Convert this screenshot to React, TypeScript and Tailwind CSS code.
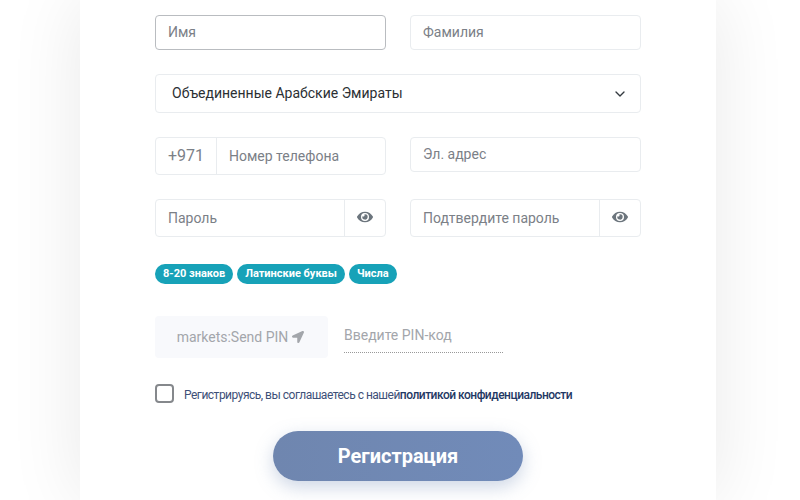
import { ChevronDown } from 'lucide-react'
import { FaEye, FaLocationArrow } from 'react-icons/fa'

function Field({ label, active }: { label: string; active?: boolean }) {
  return (
    <div
      className={`flex h-[35px] w-[231px] items-center rounded border px-[12px] text-[14px] text-[#7b8087] ${
        active ? 'border-[#b9bcc0]' : 'border-[#e9ecef]'
      }`}
    >
      {label}
    </div>
  )
}

function PasswordField({ label }: { label: string }) {
  return (
    <div className="flex h-[38px] w-[231px] items-center rounded border border-[#e9ecef] text-[14px] text-[#7b8087]">
      <div className="flex-1 px-[12px]">{label}</div>
      <div className="flex h-full w-[41px] items-center justify-center border-l border-[#e9ecef] pb-[2px]">
        <FaEye size={16} color="#6c757d" />
      </div>
    </div>
  )
}

function Pill({ label }: { label: string }) {
  return (
    <span className="flex h-[20px] items-center rounded-full bg-[#17a2b8] px-[8px] text-[11px] font-bold text-white">
      {label}
    </span>
  )
}

export default function App() {
  return (
    <div className="h-[500px] w-[800px] overflow-hidden bg-white font-['Roboto',sans-serif]">
      <div className="mx-[80px] h-full w-[636px] bg-white px-[75px] pt-[15px] shadow-[0_0_70px_rgba(0,0,0,0.09)]">
        {/* Name */}
        <div className="flex gap-[24px]">
          <Field label="Имя" active />
          <Field label="Фамилия" />
        </div>

        {/* Country */}
        <div className="mt-[24px] flex h-[39px] w-[486px] items-center justify-between rounded border border-[#e9ecef] pr-[12px] pl-[16px] text-[14px] text-[#2b2f33]">
          <span>Объединенные Арабские Эмираты</span>
          <ChevronDown size={16} strokeWidth={2} className="text-[#343a40]" />
        </div>

        {/* Phone + email */}
        <div className="mt-[24px] flex items-start gap-[24px]">
          <div className="flex h-[38px] w-[231px] items-center rounded border border-[#e9ecef] text-[#7b8087]">
            <div className="flex h-full w-[61px] items-center border-r border-[#e9ecef] pl-[12px] text-[16px]">+971</div>
            <div className="px-[12px] text-[14px]">Номер телефона</div>
          </div>
          <Field label="Эл. адрес" />
        </div>

        {/* Passwords */}
        <div className="mt-[24px] flex gap-[24px]">
          <PasswordField label="Пароль" />
          <PasswordField label="Подтвердите пароль" />
        </div>

        {/* Password rules */}
        <div className="mt-[27px] flex gap-[4px]">
          <Pill label="8-20 знаков" />
          <Pill label="Латинские буквы" />
          <Pill label="Числа" />
        </div>

        {/* PIN */}
        <div className="mt-[32px] flex gap-[16px]">
          <div className="flex h-[42px] w-[173px] items-center justify-center gap-[4px] rounded bg-[#f8f9fc] pr-[2px] text-[14px] text-[#a3a6ab]">
            <span>markets:Send PIN</span>
            <FaLocationArrow size={12} color="#a3a6ab" />
          </div>
          <div className="flex h-[37px] w-[159px] items-center border-b border-dotted border-[#999] pt-[2px] text-[14px] text-[#a3a6ab]">
            Введите PIN-код
          </div>
        </div>

        {/* Terms */}
        <div className="mt-[26px] flex items-center gap-[10px]">
          <div className="h-[19px] w-[19px] rounded-[4px] border-2 border-[#85888c]" />
          <p className="pt-[2px] text-[12px] leading-[16px] tracking-[-0.5px] text-[#3d5078]">
            Регистрируясь, вы соглашаетесь с нашей<span className="font-medium text-[#1f3864]">политикой конфиденциальности</span>
          </p>
        </div>

        {/* Submit */}
        <div className="mt-[28px] flex pl-[118px]">
          <div className="flex h-[50px] w-[250px] items-center justify-center rounded-full bg-gradient-to-r from-[#6f86af] to-[#718bb9] text-[20px] font-bold text-white shadow-[0_6px_18px_rgba(113,138,181,0.35)]">
            Регистрация
          </div>
        </div>
      </div>
    </div>
  )
}
